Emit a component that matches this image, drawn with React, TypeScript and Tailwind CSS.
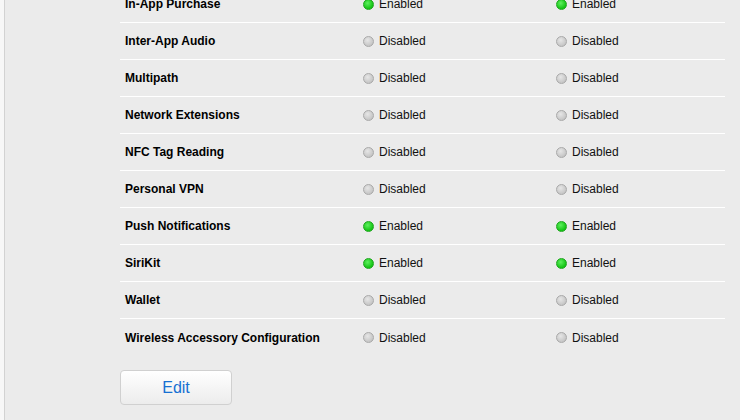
const rows: { name: string; dev: boolean; dist: boolean }[] = [
  { name: 'In-App Purchase', dev: true, dist: true },
  { name: 'Inter-App Audio', dev: false, dist: false },
  { name: 'Multipath', dev: false, dist: false },
  { name: 'Network Extensions', dev: false, dist: false },
  { name: 'NFC Tag Reading', dev: false, dist: false },
  { name: 'Personal VPN', dev: false, dist: false },
  { name: 'Push Notifications', dev: true, dist: true },
  { name: 'SiriKit', dev: true, dist: true },
  { name: 'Wallet', dev: false, dist: false },
  { name: 'Wireless Accessory Configuration', dev: false, dist: false },
];

function Status({ on }: { on: boolean }) {
  return (
    <div className="flex items-center gap-[5px]">
      {on ? (
        <span className="w-[11px] h-[11px] rounded-full border border-[#1fa51f] bg-[radial-gradient(circle_at_40%_35%,#5ef05e,#13c313_70%)]" />
      ) : (
        <span className="w-[11px] h-[11px] rounded-full border border-[#a9a9a9] bg-[radial-gradient(circle_at_40%_35%,#e6e6e6,#c4c4c4_75%)]" />
      )}
      <span className="text-[12px] text-[#111]">{on ? 'Enabled' : 'Disabled'}</span>
    </div>
  );
}

export default function App() {
  return (
    <div className="w-[740px] h-[420px] overflow-hidden bg-[#f7f7f7] pl-[4px] font-['Liberation_Sans',Arial,sans-serif]">
      <div className="h-full flex flex-col items-start border-l border-[#d2d2d2] bg-[#ebebeb] pl-[115px] pr-[15px]">
        <div className="-mt-[14px] w-full">
          {rows.map((r, i) => (
            <div
              key={r.name}
              className={`grid grid-cols-[238px_193px_1fr] items-center h-[37px] pl-[5px] ${
                i < rows.length - 1 ? 'border-b border-white' : ''
              }`}
            >
              <span className="text-[12px] font-bold text-black">{r.name}</span>
              <Status on={r.dev} />
              <Status on={r.dist} />
            </div>
          ))}
        </div>
        <button className="mt-[14px] w-[112px] h-[35px] rounded-[4px] border border-[#d0d0d0] bg-gradient-to-b from-white to-[#ececec] text-[16px] text-[#1670d2]">
          Edit
        </button>
      </div>
    </div>
  );
}
